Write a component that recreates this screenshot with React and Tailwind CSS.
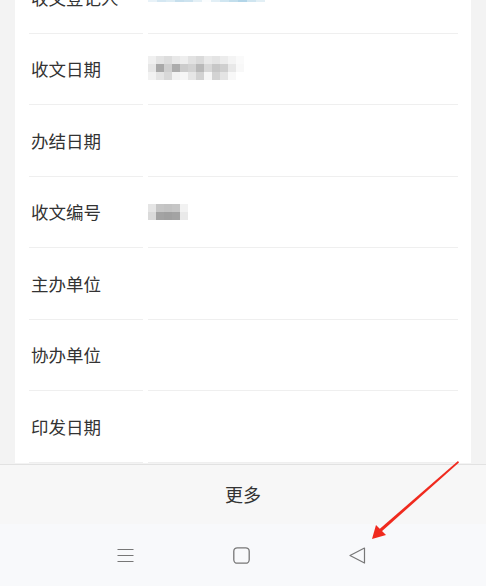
import React from "react";

const rows = ["收文登记人", "收文日期", "办结日期", "收文编号", "主办单位", "协办单位", "印发日期"];

function Pix({ grid, size = 8, className = "" }) {
  return (
    <div className={"flex flex-col " + className}>
      {grid.map((r, i) => (
        <div key={i} className="flex">
          {r.map((c, j) => (
            <div key={j} style={{ width: size, height: size, background: c }} />
          ))}
        </div>
      ))}
    </div>
  );
}

function Value({ i }) {
  if (i === 0)
    return (
      <div className="flex items-end gap-0 self-start mt-[31px]">
        <Pix
          size={9}
          grid={[
            ["#e8f2f8", "#d4e7f2", "#dcecf4", "#c6dfed", "#cde3ef", "#e4f0f6", "#fbfdfe", "#e2eff6", "#d0e6f1", "#c2deec", "#b2d5e8", "#cfe5f0", "#e2eff5"],
          ]}
        />
      </div>
    );
  if (i === 1)
    return (
      <Pix
        size={8}
        className="mt-[-2px]"
        grid={[
          ["#f0f0f0", "#e4e4e4", "#dddddd", "#e8e8e8", "#eeeeee", "#e2e2e2", "#dadada", "#e9e9e9", "#e4e4e4", "#ececec", "#f4f4f4", "#fafafa"],
          ["#e6e6e6", "#a9a9a9", "#cfcfcf", "#acacac", "#cccccc", "#d2d2d2", "#b9b9b9", "#d8d8d8", "#c7c7c7", "#cfcfcf", "#e8e8e8", "#f8f8f8"],
          ["#f2f2f2", "#e4e4e4", "#d8d8d8", "#f2f2f2", "#f6f6f6", "#e6e6e6", "#d2d2d2", "#f6f6f6", "#d3d3d3", "#e4e4e4", "#f8f8f8", "#ffffff"],
        ]}
      />
    );
  if (i === 3)
    return (
      <Pix
        size={8}
        grid={[
          ["#e5e5e5", "#c6c6c6", "#c3c3c3", "#c6c6c6", "#f2f2f2"],
          ["#dadada", "#a3a3a3", "#a0a0a0", "#a3a3a3", "#e9e9e9"],
        ]}
      />
    );
  return null;
}

export default function App() {
  return (
    <div
      className="relative w-[486px] h-[586px] overflow-hidden bg-[#f3f3f3] flex flex-col"
      style={{ fontFamily: '"Noto Sans CJK SC", "Noto Sans", sans-serif' }}
    >
      <div className="flex-1 overflow-hidden">
        <div className="mx-[15px] mt-[-38px] bg-white">
          {rows.map((label, i) => (
            <div key={label} className="h-[71.5px] flex flex-col">
              <div className="flex-1 flex items-center">
                <div className="w-[133px] pl-[16px] text-[17.5px] text-[#333333] leading-none">{label}</div>
                <Value i={i} />
              </div>
              <div className="flex h-px ml-[14px] mr-[13px] gap-[5px]">
                <div className="w-[114px] bg-[#efefef]" />
                <div className="flex-1 bg-[#efefef]" />
              </div>
            </div>
          ))}
        </div>
      </div>
      <div className="h-[60px] shrink-0 bg-[#f7f7f7] border-t border-[#e2e2e2] flex items-center justify-center text-[18px] text-[#333333]">
        更多
      </div>
      <div className="h-[62px] shrink-0 bg-[#f8f9fb] flex items-center">
        <div className="w-full flex items-center justify-center gap-[99px] pr-[4px] pt-[1px]">
          <svg width="17" height="17" viewBox="0 0 17 17" fill="none" stroke="#777" strokeWidth="1.2">
            <path d="M0.5 2.5H16.5M0.5 8.5H16.5M0.5 14.5H16.5" />
          </svg>
          <svg width="17" height="17" viewBox="0 0 17 17" fill="none" stroke="#777" strokeWidth="1.3">
            <rect x="0.8" y="0.8" width="15.4" height="15.4" rx="3.5" />
          </svg>
          <svg width="17" height="17" viewBox="0 0 17 17" fill="none" stroke="#777" strokeWidth="1.2" strokeLinejoin="round">
            <path d="M15.5 1L1 8.5L15.5 16Z" />
          </svg>
        </div>
      </div>
      <svg className="absolute left-0 top-0 pointer-events-none" width="486" height="586" viewBox="0 0 486 586">
        <polygon points="458,461 459,462.5 381,532 379,529.5" fill="#f02a1e" />
        <polygon points="372,539 376,525 386,535" fill="#f02a1e" />
      </svg>
    </div>
  );
}
